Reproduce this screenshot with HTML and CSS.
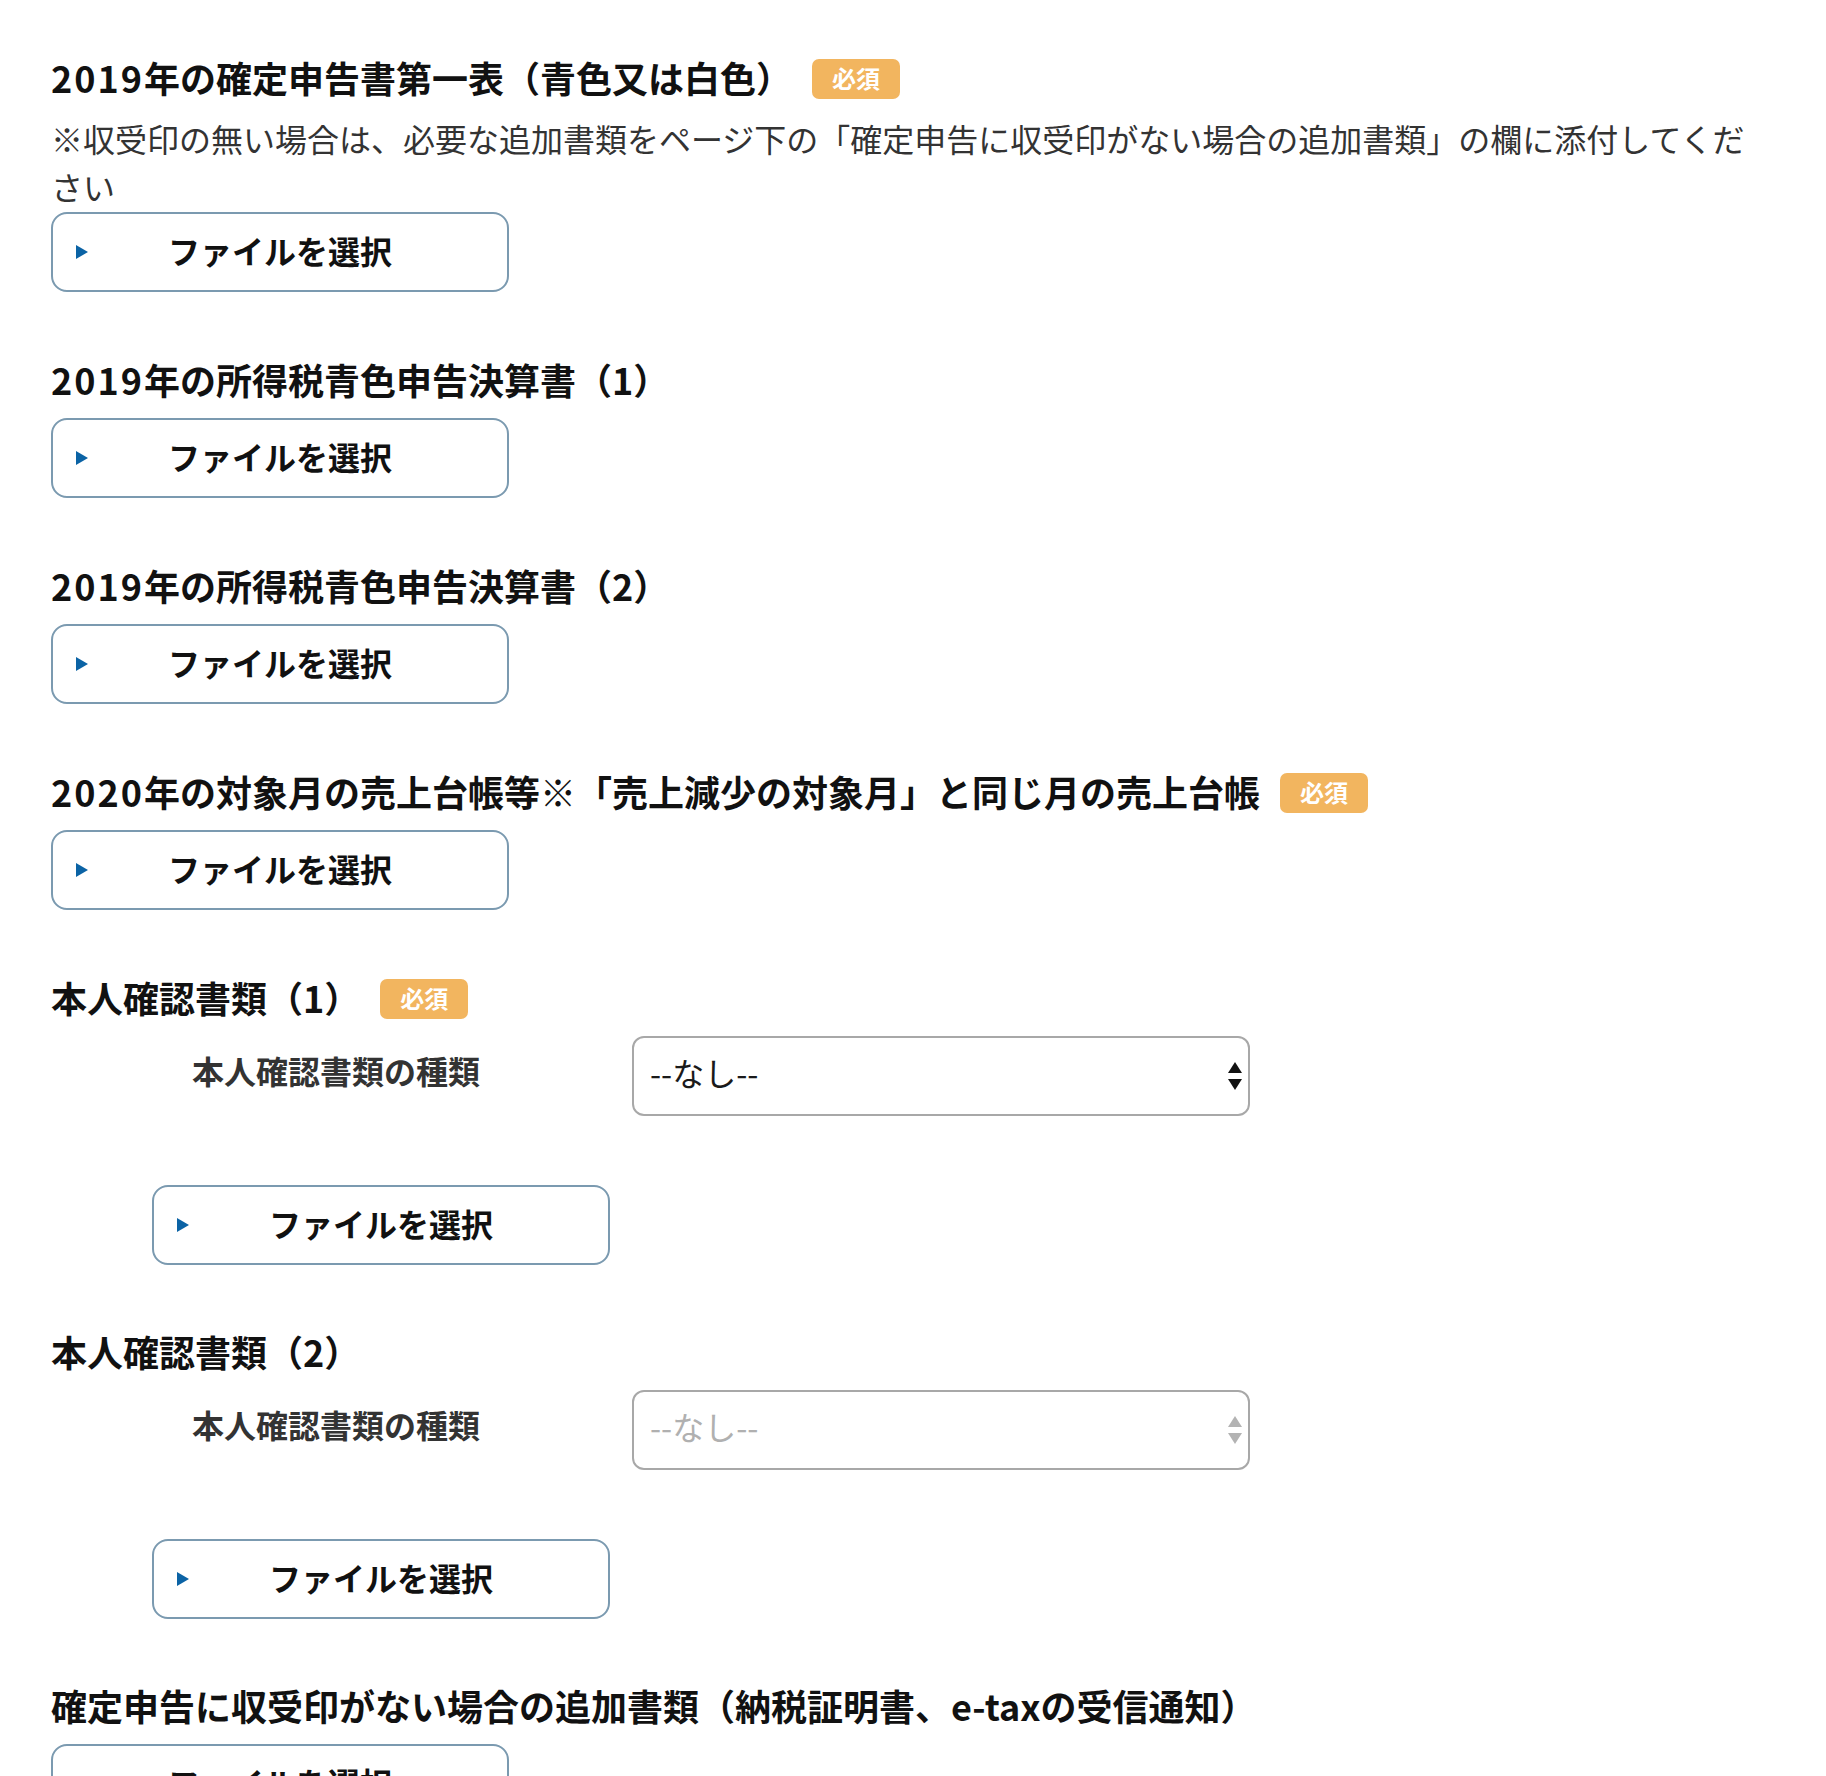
FILE: index.html
```html
<!DOCTYPE html>
<html lang="ja">
<head>
<meta charset="utf-8">
<title>書類アップロード</title>
<link rel="stylesheet" href="styles.css">
</head>
<body>
<main class="form">

  <section class="field">
    <div class="field-title"><span><span class="num">2019</span>年の確定申告書第一表（青色又は白色）</span><span class="badge">必須</span></div>
    <p class="note">※収受印の無い場合は、必要な追加書類をページ下の「確定申告に収受印がない場合の追加書類」の欄に添付してください</p>
    <button class="file-btn" type="button"><span class="tri"></span><span class="file-label">ファイルを選択</span></button>
  </section>

  <section class="field">
    <div class="field-title"><span><span class="num">2019</span>年の所得税青色申告決算書（1）</span></div>
    <button class="file-btn" type="button"><span class="tri"></span><span class="file-label">ファイルを選択</span></button>
  </section>

  <section class="field">
    <div class="field-title"><span><span class="num">2019</span>年の所得税青色申告決算書（2）</span></div>
    <button class="file-btn" type="button"><span class="tri"></span><span class="file-label">ファイルを選択</span></button>
  </section>

  <section class="field">
    <div class="field-title"><span><span class="num">2020</span>年の対象月の売上台帳等※「売上減少の対象月」と同じ月の売上台帳</span><span class="badge">必須</span></div>
    <button class="file-btn" type="button"><span class="tri"></span><span class="file-label">ファイルを選択</span></button>
  </section>

  <section class="field field-id">
    <div class="field-title"><span>本人確認書類（1）</span><span class="badge">必須</span></div>
    <div class="sub">
      <div class="select-row">
        <label class="select-label" for="idtype1">本人確認書類の種類</label>
        <div class="select-wrap">
          <select id="idtype1" class="select"><option>--なし--</option></select>
          <svg class="arrows" width="14" height="28" viewBox="0 0 14 28" aria-hidden="true"><polygon points="7,0 14,11 0,11"/><polygon points="0,17 14,17 7,28"/></svg>
        </div>
      </div>
      <button class="file-btn" type="button"><span class="tri"></span><span class="file-label">ファイルを選択</span></button>
    </div>
  </section>

  <section class="field field-id">
    <div class="field-title"><span>本人確認書類（2）</span></div>
    <div class="sub">
      <div class="select-row">
        <label class="select-label" for="idtype2">本人確認書類の種類</label>
        <div class="select-wrap is-disabled">
          <select id="idtype2" class="select" disabled><option>--なし--</option></select>
          <svg class="arrows" width="14" height="28" viewBox="0 0 14 28" aria-hidden="true"><polygon points="7,0 14,11 0,11"/><polygon points="0,17 14,17 7,28"/></svg>
        </div>
      </div>
      <button class="file-btn" type="button"><span class="tri"></span><span class="file-label">ファイルを選択</span></button>
    </div>
  </section>

  <section class="field">
    <div class="field-title"><span>確定申告に収受印がない場合の追加書類（納税証明書、e-taxの受信通知）</span></div>
    <button class="file-btn" type="button"><span class="tri"></span><span class="file-label">ファイルを選択</span></button>
  </section>

</main>
</body>
</html>
```

FILE: styles.css
```css
html {
  overflow: hidden;
  background: #fff;
}

body {
  margin: 0;
  font-family: "Noto Sans CJK JP", "Noto Sans", sans-serif;
  color: #111;
}

.form {
  width: 1710px;
  padding: 52px 0 0 51px;
}

.field {
  margin-bottom: 62px;
}

.field-id {
  margin-bottom: 61px;
}

.field-title {
  display: flex;
  align-items: center;
  height: 54px;
  font-size: 36px;
  line-height: 50px;
  font-weight: 700;
  color: #111;
  margin-bottom: 10px;
}

.field-title > span:first-child {
  padding-bottom: 4px;
}

.num {
  letter-spacing: 2px;
}

.badge {
  display: inline-block;
  margin-left: 20px;
  height: 40px;
  padding: 0 20px;
  border-radius: 7px;
  background: #f2b55f;
  color: #fff;
  font-size: 24px;
  line-height: 38px;
  font-weight: 700;
}

.note {
  margin: -2px 0 0;
  padding-bottom: 2px;
  font-size: 32px;
  line-height: 48px;
  color: #333;
}

.file-btn {
  display: grid;
  grid-template-columns: 1fr auto 1fr;
  align-items: center;
  box-sizing: border-box;
  width: 458px;
  height: 80px;
  padding: 0 0 4px;
  border: 2px solid #7b9ab0;
  border-radius: 16px;
  background: #fff;
  font-family: inherit;
  font-size: 32px;
  font-weight: 700;
  color: #111;
  cursor: pointer;
}

.tri {
  justify-self: start;
  margin: 4px 0 0 23px;
  width: 0;
  height: 0;
  border-left: 12px solid #0b63a5;
  border-top: 7px solid transparent;
  border-bottom: 7px solid transparent;
}

.file-label {
  line-height: 48px;
}

.sub {
  margin-left: 101px;
}

.select-row {
  display: flex;
  align-items: center;
  margin-bottom: 69px;
}

.select-label {
  box-sizing: border-box;
  width: 440px;
  margin-left: 40px;
  padding-bottom: 12px;
  font-size: 32px;
  line-height: 48px;
  font-weight: 700;
  color: #333;
}

.select-wrap {
  position: relative;
  width: 618px;
  height: 80px;
}

.select {
  appearance: none;
  -webkit-appearance: none;
  box-sizing: border-box;
  width: 100%;
  height: 100%;
  margin: 0;
  padding: 0 40px 8px 16px;
  border: 2px solid #a8a8a8;
  border-radius: 12px;
  background: #fff;
  font-family: inherit;
  font-size: 32px;
  color: #1a1a1a;
  opacity: 1;
}

.arrows {
  position: absolute;
  right: 8px;
  top: 26px;
  fill: #111;
  pointer-events: none;
}

.is-disabled .select {
  color: #b0b0b0;
  background: #fff;
}

.is-disabled .arrows {
  fill: #b3b3b3;
}
```
